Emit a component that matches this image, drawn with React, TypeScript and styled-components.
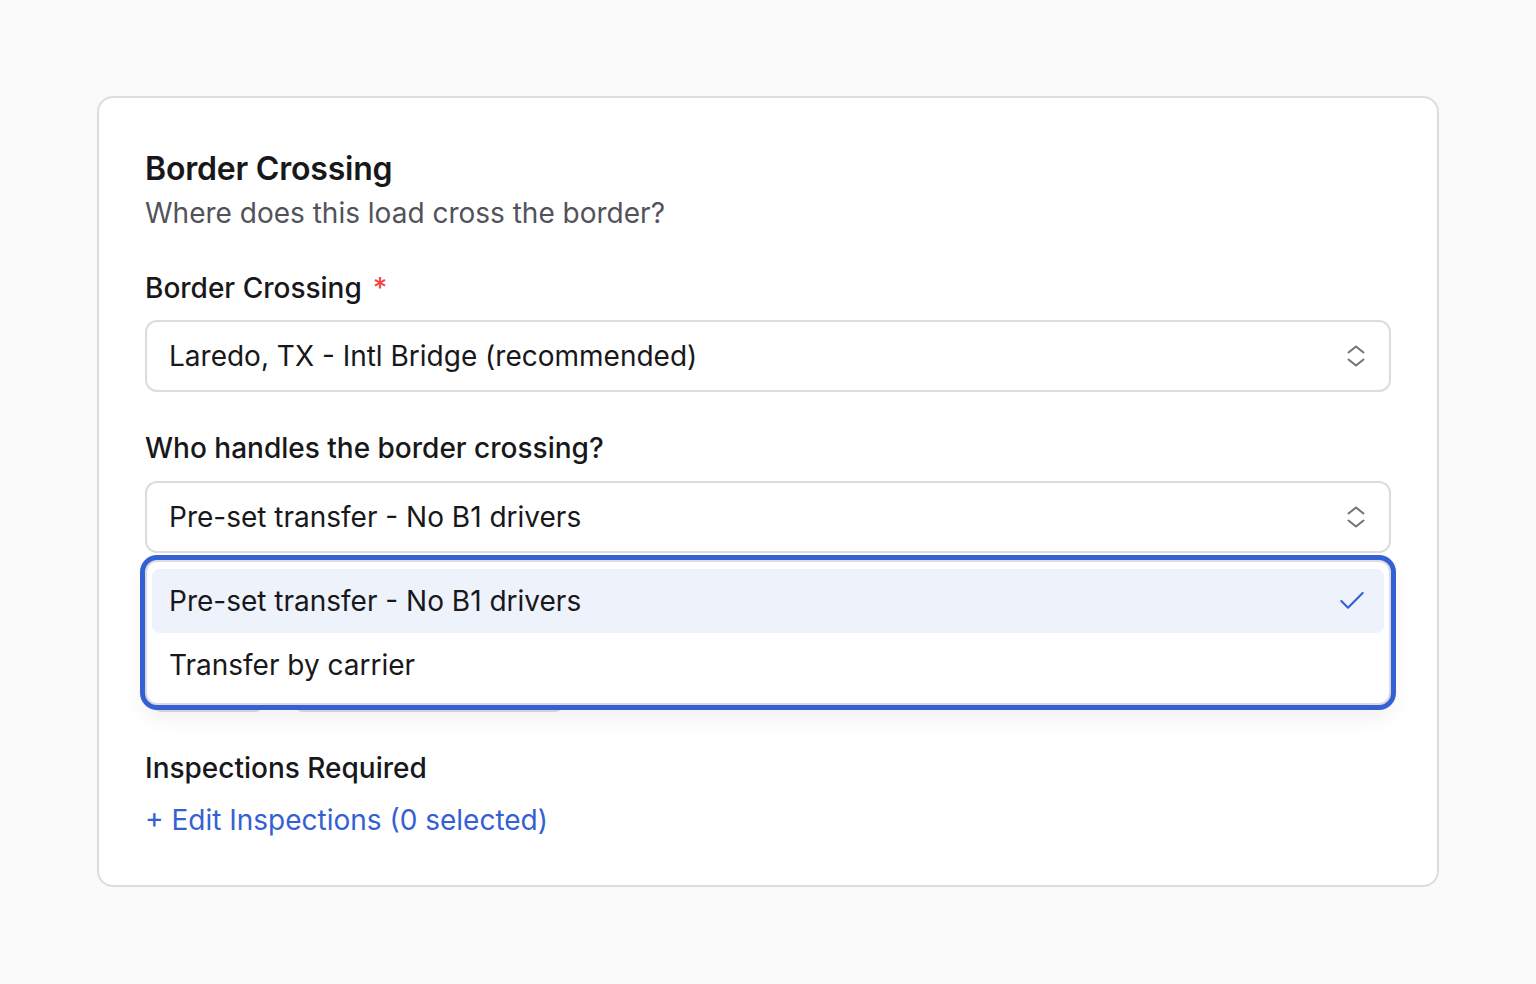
import React, { useState } from 'react';
import styled, { createGlobalStyle } from 'styled-components';
import { Check } from 'lucide-react';

const color = {
  page: '#fafafa',
  border: '#dcdce0',
  text: '#18181b',
  muted: '#52525b',
  icon: '#71717a',
  blue: '#3560d4',
  highlight: '#eef2fb',
  red: '#ef4444',
};

const GlobalStyle = createGlobalStyle`
  html, body {
    margin: 0;
    padding: 0;
    background: ${color.page};
    font-family: Inter, "Noto Sans", "Liberation Sans", sans-serif;
    color: ${color.text};
  }
`;

const Page = styled.main`
  padding: 96px 97px;
`;

const Card = styled.section`
  background: #fff;
  border: 2px solid ${color.border};
  border-radius: 16px;
  padding: 52px 46px 47px;
  display: flex;
  flex-direction: column;
`;

const Header = styled.header`
  display: flex;
  flex-direction: column;
  gap: 7px;
  margin-bottom: 40px;
`;

const Title = styled.h2`
  margin: 0;
  font-size: 32px;
  line-height: 38px;
  font-weight: 600;
  letter-spacing: -0.2px;
`;

const Subtitle = styled.p`
  margin: 0;
  font-size: 28px;
  line-height: 36px;
  color: ${color.muted};
`;

const Fields = styled.div`
  display: flex;
  flex-direction: column;
  gap: 39px;
`;

const Field = styled.div<{ $gap?: number }>`
  position: relative;
  display: flex;
  flex-direction: column;
  gap: ${({ $gap = 15 }) => `${$gap}px`};
`;

const Label = styled.label`
  font-size: 28px;
  line-height: 34px;
  font-weight: 500;
`;

const Required = styled.span`
  color: ${color.red};
  margin-left: 11px;
`;

const SelectButton = styled.button`
  box-sizing: border-box;
  display: flex;
  align-items: center;
  justify-content: space-between;
  height: 72px;
  padding: 0 23px 0 22px;
  background: #fff;
  border: 2px solid ${color.border};
  border-radius: 12px;
  font-family: inherit;
  font-size: 28px;
  color: ${color.text};
  cursor: pointer;
  text-align: left;
`;

const Menu = styled.ul`
  position: absolute;
  top: calc(100% + 7px);
  left: 0;
  right: 0;
  z-index: 10;
  margin: 0;
  padding: 7px 5px 6px;
  list-style: none;
  background: #fff;
  border: 2px solid ${color.border};
  border-radius: 12px;
  box-shadow: 0 0 0 5px ${color.blue}, 0 10px 24px rgba(0, 0, 0, 0.08);
`;

const Option = styled.li<{ $active?: boolean }>`
  display: flex;
  align-items: center;
  justify-content: space-between;
  height: 64px;
  padding: 0 16px 0 17px;
  border-radius: 8px;
  font-size: 28px;
  background: ${({ $active }) => ($active ? color.highlight : 'transparent')};
  cursor: pointer;

  svg {
    color: ${color.blue};
  }
`;

const ChipRow = styled.div`
  display: flex;
  gap: 26px;
  padding-left: 5px;
`;

const Chip = styled.button<{ $width: number }>`
  box-sizing: border-box;
  width: ${({ $width }) => `${$width}px`};
  height: 56px;
  border: 2px solid ${color.border};
  border-radius: 12px;
  background: #fff;
  font-family: inherit;
  font-size: 24px;
  color: ${color.text};
`;

const LinkButton = styled.button`
  align-self: flex-start;
  padding: 0;
  border: none;
  background: none;
  font-family: inherit;
  font-size: 28px;
  line-height: 36px;
  color: ${color.blue};
  cursor: pointer;
`;

function UpDownIcon() {
  return (
    <svg width='20' height='26' viewBox='0 0 20 26' fill='none' stroke={color.icon}
      strokeWidth='2' strokeLinecap='round' strokeLinejoin='round'>
      <path d='M2.5 9.5 L10 3.5 L17.5 9.5' />
      <path d='M2.5 16.5 L10 22.5 L17.5 16.5' />
    </svg>
  );
}

const handlerOptions = ['Pre-set transfer - No B1 drivers', 'Transfer by carrier'];

export default function App() {
  const [handler, setHandler] = useState(handlerOptions[0]);
  const [open, setOpen] = useState(true);

  return (
    <>
      <GlobalStyle />
      <Page>
        <Card>
          <Header>
            <Title>Border Crossing</Title>
            <Subtitle>Where does this load cross the border?</Subtitle>
          </Header>

          <Fields>
            <Field>
              <Label>
                Border Crossing<Required>*</Required>
              </Label>
              <SelectButton type='button'>
                Laredo, TX - Intl Bridge (recommended)
                <UpDownIcon />
              </SelectButton>
            </Field>

            <Field $gap={16}>
              <Label>Who handles the border crossing?</Label>
              <SelectButton type='button' onClick={() => setOpen((prev) => !prev)}>
                {handler}
                <UpDownIcon />
              </SelectButton>
              {open && (
                <Menu>
                  {handlerOptions.map((opt) => (
                    <Option
                      key={opt}
                      $active={opt === handler}
                      onClick={() => { setHandler(opt); setOpen(false); }}
                    >
                      {opt}
                      {opt === handler && <Check size={32} strokeWidth={1.6} />}
                    </Option>
                  ))}
                </Menu>
              )}
            </Field>

            <Field $gap={30}>
              <Label>Transfer location</Label>
              <ChipRow>
                <Chip type='button' $width={116}>Mexico</Chip>
                <Chip type='button' $width={274}>United States</Chip>
              </ChipRow>
            </Field>

            <Field $gap={17}>
              <Label>Inspections Required</Label>
              <LinkButton type='button'>+ Edit Inspections (0 selected)</LinkButton>
            </Field>
          </Fields>
        </Card>
      </Page>
    </>
  );
}
